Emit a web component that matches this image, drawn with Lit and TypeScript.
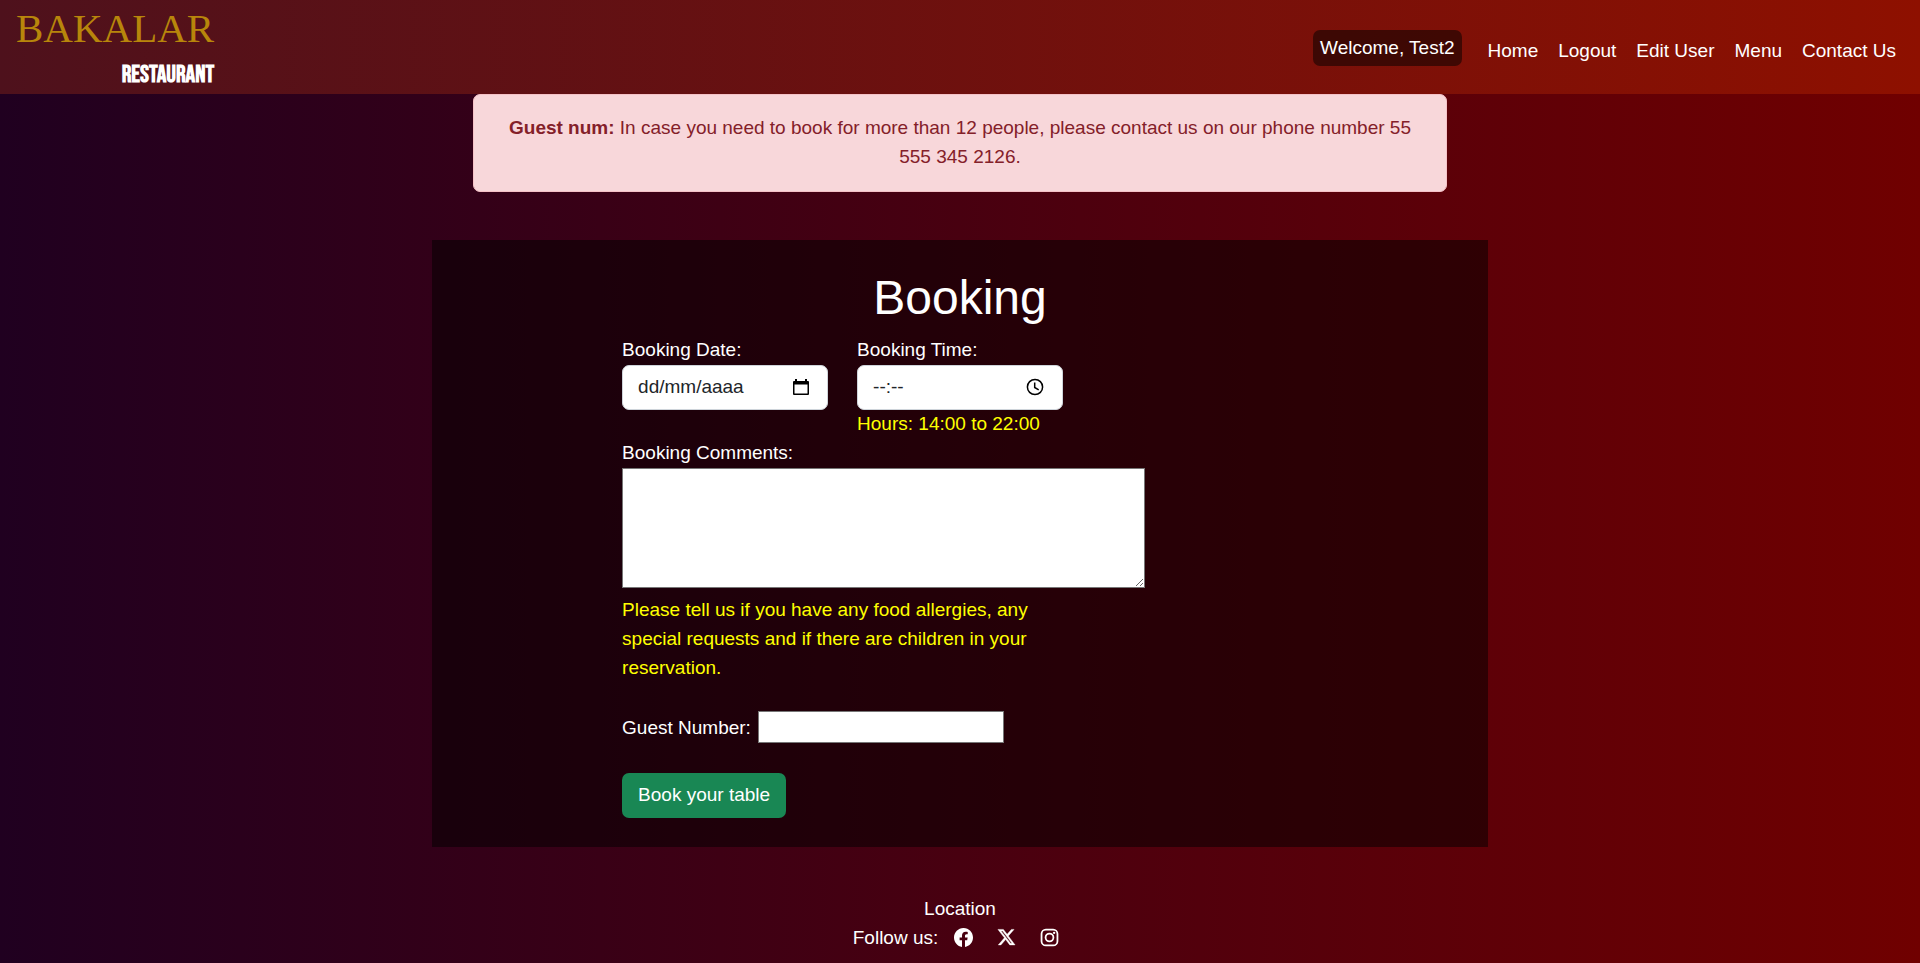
import { LitElement, html, css, svg } from "lit";
import { customElement } from "lit/decorators.js";

const NAV_LINKS = ["Home", "Logout", "Edit User", "Menu", "Contact Us"];

const SOCIAL_LINKS = [
  {
    name: "Facebook",
    shape: svg`<path d="M16 8.049c0-4.446-3.582-8.05-8-8.05C3.58 0-.002 3.603-.002 8.05c0 4.017 2.926 7.347 6.75 7.951v-5.625h-2.03V8.05H6.75V6.275c0-2.017 1.195-3.131 3.022-3.131.876 0 1.791.157 1.791.157v1.98h-1.009c-.993 0-1.303.621-1.303 1.258v1.51h2.218l-.354 2.326H9.25V16c3.824-.604 6.75-3.934 6.75-7.951"/>`,
  },
  {
    name: "X",
    shape: svg`<path transform="translate(0.8 0.5) scale(0.9)" stroke="currentColor" stroke-width="0.4" d="M12.6.75h2.454l-5.36 6.142L16 15.25h-4.937l-3.867-5.07-4.425 5.07H.316l5.733-6.57L0 .75h5.063l3.495 4.633L12.601.75Zm-.86 13.028h1.36L4.323 2.145H2.865z"/>`,
  },
  {
    name: "Instagram",
    shape: svg`<g fill="none" stroke="currentColor" stroke-width="1.5"><rect x="1.3" y="1.3" width="13.4" height="13.4" rx="3.6"/><circle cx="8" cy="8" r="3.3"/></g><circle cx="11.9" cy="4.1" r="1"/>`,
  },
];

@customElement("site-header")
export class SiteHeader extends LitElement {
  static styles = css`
    :host { display: block; }
    .bar {
      display: flex;
      justify-content: space-between;
      align-items: flex-start;
      height: 94px;
      padding: 0 24px 0 16px;
      box-sizing: border-box;
      background: linear-gradient(90deg, #4e111c, #8e1000);
    }
    .brand { display: flex; flex-direction: column; align-items: flex-end; color: #fff; text-decoration: none; }
    .name { font: 41px/56px "Liberation Serif", serif; color: #b8860b; }
    .kind { font: bold 24px/38px "Bebas Neue", "Liberation Sans Narrow", "Liberation Sans", sans-serif; }
    .menu { display: flex; align-items: flex-start; gap: 26px; padding-top: 30px; }
    .welcome { padding: 3px 7px 4px; border-radius: 7px; background: rgba(0, 0, 0, 0.5); }
    .links { display: flex; gap: 20px; margin: 0; padding: 6px 0 0; list-style: none; }
    .link { color: #fff; text-decoration: none; }
  `;

  render() {
    return html`
      <header class="bar">
        <a class="brand" href="#home">
          <span class="name">BAKALAR</span>
          <span class="kind">RESTAURANT</span>
        </a>
        <nav class="menu">
          <span class="welcome">Welcome, Test2</span>
          <ul class="links">
            ${NAV_LINKS.map((label) => html`<li><a class="link" href="#">${label}</a></li>`)}
          </ul>
        </nav>
      </header>
    `;
  }
}

@customElement("booking-form")
export class BookingForm extends LitElement {
  static styles = css`
    :host { display: block; }
    .panel {
      width: 55%;
      margin: 48px auto 0;
      padding: 29px 0;
      background: rgba(0, 0, 0, 0.5);
    }
    .title { margin: 0 0 8px; font-size: 48px; line-height: 58px; font-weight: 400; text-align: center; }
    .form { margin-left: 18%; }
    .row { display: flex; gap: 29px; }
    .col { width: 206px; }
    .label { display: block; padding-bottom: 1px; }
    .field {
      display: flex;
      align-items: center;
      box-sizing: border-box;
      height: 45px;
      padding: 0 16px 2px 15px;
      border: 1px solid #ced4da;
      border-radius: 7px;
      background: #fff;
      color: #212529;
    }
    .input { flex: 1; min-width: 0; padding: 0; border: 0; background: none; font: inherit; color: inherit; outline: none; }
    .input::placeholder { color: #212529; opacity: 1; }
    .picker { display: flex; padding: 0; border: 0; background: none; color: #000; }
    .hint { margin: 0; line-height: 28px; color: #ff0; }
    .comments { display: block; box-sizing: border-box; width: 523px; height: 120px; border: 1px solid #767676; background: #fff; font: inherit; }
    .advice { max-width: 441px; margin: 7px 0 29px; line-height: 29px; }
    .guests { display: flex; align-items: center; gap: 7px; }
    .number { box-sizing: border-box; width: 246px; height: 32px; padding: 1px 2px; border: 1px solid #767676; background: #fff; font: inherit; }
    .submit {
      display: block;
      margin-top: 30px;
      padding: 7px 16px 9px;
      border: 0;
      border-radius: 7px;
      background: #198754;
      color: #fff;
      font: inherit;
      cursor: pointer;
    }
  `;

  render() {
    return html`
      <section class="panel">
        <h1 class="title">Booking</h1>
        <form class="form" @submit=${(e: Event) => e.preventDefault()}>
          <div class="row">
            <div class="col">
              <label class="label" for="date">Booking Date:</label>
              <div class="field">
                <input class="input" id="date" type="text" placeholder="dd/mm/aaaa" />
                <button class="picker" type="button" aria-label="Pick a date">
                  <svg width="20" height="20" viewBox="0 0 20 20" fill="currentColor">
                    <path d="M4 2h2v2h8V2h2v2h1q1 0 1 1v12q0 1-1 1H3q-1 0-1-1V5q0-1 1-1h1zM3.500 7.500v9h13v-9z" fill-rule="evenodd" />
                  </svg>
                </button>
              </div>
            </div>
            <div class="col">
              <label class="label" for="time">Booking Time:</label>
              <div class="field">
                <input class="input" id="time" type="text" placeholder="--:--" />
                <button class="picker" type="button" aria-label="Pick a time">
                  <svg width="20" height="20" viewBox="0 0 20 20" fill="none" stroke="currentColor" stroke-width="1.500">
                    <circle cx="9" cy="10" r="7.600" />
                    <path d="M8.700 5.500v5l4 2.300" />
                  </svg>
                </button>
              </div>
              <p class="hint">Hours: 14:00 to 22:00</p>
            </div>
          </div>
          <label class="label" for="comments">Booking Comments:</label>
          <textarea class="comments" id="comments"></textarea>
          <p class="hint advice">
            Please tell us if you have any food allergies, any special requests and if there are
            children in your reservation.
          </p>
          <div class="guests">
            <label for="guests">Guest Number:</label>
            <input class="number" id="guests" type="number" />
          </div>
          <button class="submit" type="submit">Book your table</button>
        </form>
      </section>
    `;
  }
}

@customElement("site-footer")
export class SiteFooter extends LitElement {
  static styles = css`
    :host { display: block; }
    .footer { display: flex; flex-direction: column; align-items: center; padding: 47px 0 10px; }
    .link { color: #fff; text-decoration: none; }
    .follow { display: flex; align-items: center; gap: 8px; }
    .social { display: flex; padding: 0 8px; }
    .icon { width: 19px; height: 19px; }
    .icons { display: flex; gap: 8px; }
  `;

  render() {
    return html`
      <footer class="footer">
        <a class="link" href="#location">Location</a>
        <div class="follow">
          <span>Follow us:</span>
          <div class="icons">
            ${SOCIAL_LINKS.map(
              ({ name, shape }) => html`
                <a class="link social" href="#" aria-label=${name}>
                  <svg class="icon" viewBox="0 0 16 16" fill="currentColor">${shape}</svg>
                </a>
              `
            )}
          </div>
        </div>
      </footer>
    `;
  }
}

@customElement("app-root")
export class AppRoot extends LitElement {
  static styles = css`
    :host {
      display: block;
      min-height: 100vh;
      background: linear-gradient(90deg, #200020, #700000);
      color: #fff;
      font: 19px/29px "Liberation Sans", Arial, sans-serif;
    }
    .alert {
      box-sizing: border-box;
      max-width: 974px;
      margin: 0 auto;
      padding: 18px 19px 20px;
      border: 1px solid #f5c2c7;
      border-radius: 7px;
      background: #f8d7da;
      color: #842029;
      text-align: center;
    }
  `;

  render() {
    return html`
      <site-header></site-header>
      <main>
        <div class="alert" role="alert">
          <strong>Guest num:</strong> In case you need to book for more than 12 people, please
          contact us on our phone number 55 555 345 2126.
        </div>
        <booking-form></booking-form>
      </main>
      <site-footer></site-footer>
    `;
  }
}
